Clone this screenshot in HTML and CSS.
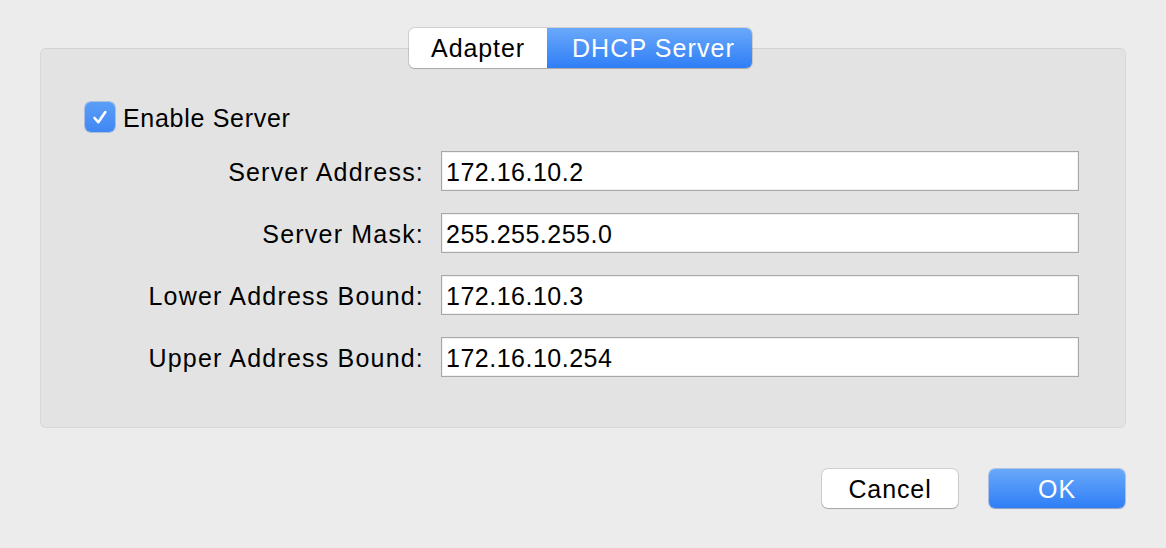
FILE: index.html
```html
<!DOCTYPE html>
<html>
<head>
<meta charset="utf-8">
<link rel="stylesheet" href="styles.css">
</head>
<body>
<div class="dialog">
  <div class="tabs">
    <div class="tab">Adapter</div>
    <div class="tab active">DHCP Server</div>
  </div>
  <div class="group">
    <label class="check-row">
      <span class="checkbox">
        <svg width="20" height="20" viewBox="0 0 20 20"><path d="M4.5 11 L8.3 15.2 L15.3 5" fill="none" stroke="#fff" stroke-width="2.6" stroke-linecap="round" stroke-linejoin="round"/></svg>
      </span>
      <span class="check-label">Enable Server</span>
    </label>
    <div class="form">
      <div class="label">Server Address:</div>
      <div class="field">172.16.10.2</div>
      <div class="label">Server Mask:</div>
      <div class="field">255.255.255.0</div>
      <div class="label">Lower Address Bound:</div>
      <div class="field">172.16.10.3</div>
      <div class="label">Upper Address Bound:</div>
      <div class="field">172.16.10.254</div>
    </div>
  </div>
  <div class="buttons">
    <div class="btn">Cancel</div>
    <div class="btn primary">OK</div>
  </div>
</div>
</body>
</html>
```
FILE: styles.css
```css
html, body {
  margin: 0;
  padding: 0;
  background: #ececec;
}
body {
  width: 1166px;
  height: 548px;
  overflow: hidden;
  font-family: "Liberation Sans", Arial, sans-serif;
  font-size: 25px;
  letter-spacing: 1.2px;
  color: #000;
}
.dialog {
  padding: 28px 40px 0 40px;
  display: flex;
  flex-direction: column;
}
.tabs {
  display: flex;
  align-self: flex-start;
  margin-left: 369px;
  margin-bottom: -20px;
  position: relative;
  z-index: 1;
  height: 40px;
  border-radius: 6px;
  box-shadow: 0 0 0 1px rgba(0,0,0,0.12), 0 1px 1px rgba(0,0,0,0.15);
  overflow: hidden;
}
.tab {
  display: flex;
  align-items: center;
  justify-content: center;
  background: #fff;
  height: 40px;
  box-sizing: border-box;
  padding-top: 1px;
}
.tab:first-child {
  width: 138px;
  letter-spacing: 0.9px;
}
.tab.active {
  width: 205px;
  padding-left: 8px;
  color: #fff;
  letter-spacing: 1.1px;
  background: linear-gradient(#6aa9fa, #2f7ef7);
}
.group {
  border: 1px solid #d8d8d8;
  border-top-color: #d3d3d3;
  background: #e3e3e3;
  border-radius: 6px;
  box-sizing: border-box;
  height: 380px;
  padding-top: 53px;
}
.check-row {
  display: flex;
  align-items: center;
  margin-left: 44px;
  height: 30px;
}
.checkbox {
  width: 30px;
  height: 30px;
  box-sizing: border-box;
  border-radius: 6px;
  background: linear-gradient(#5b9ef7, #3f87f4);
  box-shadow: 0 0 0 1px rgba(60,120,220,0.35);
  display: flex;
  align-items: center;
  justify-content: center;
}
.check-label {
  margin-left: 8px;
  letter-spacing: 0.7px;
  padding-top: 3px;
}
.form {
  display: grid;
  grid-template-columns: 383px 638px;
  column-gap: 17px;
  row-gap: 22px;
  margin-top: 19px;
}
.label {
  text-align: right;
  display: flex;
  align-items: center;
  justify-content: flex-end;
  height: 40px;
  box-sizing: border-box;
  padding-top: 2px;
}
.field {
  height: 40px;
  box-sizing: border-box;
  background: #fff;
  border: 1px solid #a7a7a7;
  box-shadow: inset 0 0 0 1px #f1f1f1;
  display: flex;
  align-items: center;
  padding-left: 4px;
  padding-top: 2px;
  letter-spacing: 0.5px;
}
.buttons {
  display: flex;
  justify-content: flex-end;
  gap: 31px;
  margin-top: 41px;
  padding-right: 1px;
}
.btn {
  width: 136px;
  height: 39px;
  box-sizing: border-box;
  padding-top: 2px;
  border-radius: 6px;
  background: #fff;
  box-shadow: 0 0 0 1px rgba(0,0,0,0.12), 0 1px 1px rgba(0,0,0,0.2);
  display: flex;
  align-items: center;
  justify-content: center;
  letter-spacing: 0.9px;
}
.btn.primary {
  color: #fff;
  background: linear-gradient(#6aa9fa, #2f7ef7);
  box-shadow: 0 0 0 1px rgba(40,100,220,0.3), 0 1px 1px rgba(0,0,0,0.2);
}
```
